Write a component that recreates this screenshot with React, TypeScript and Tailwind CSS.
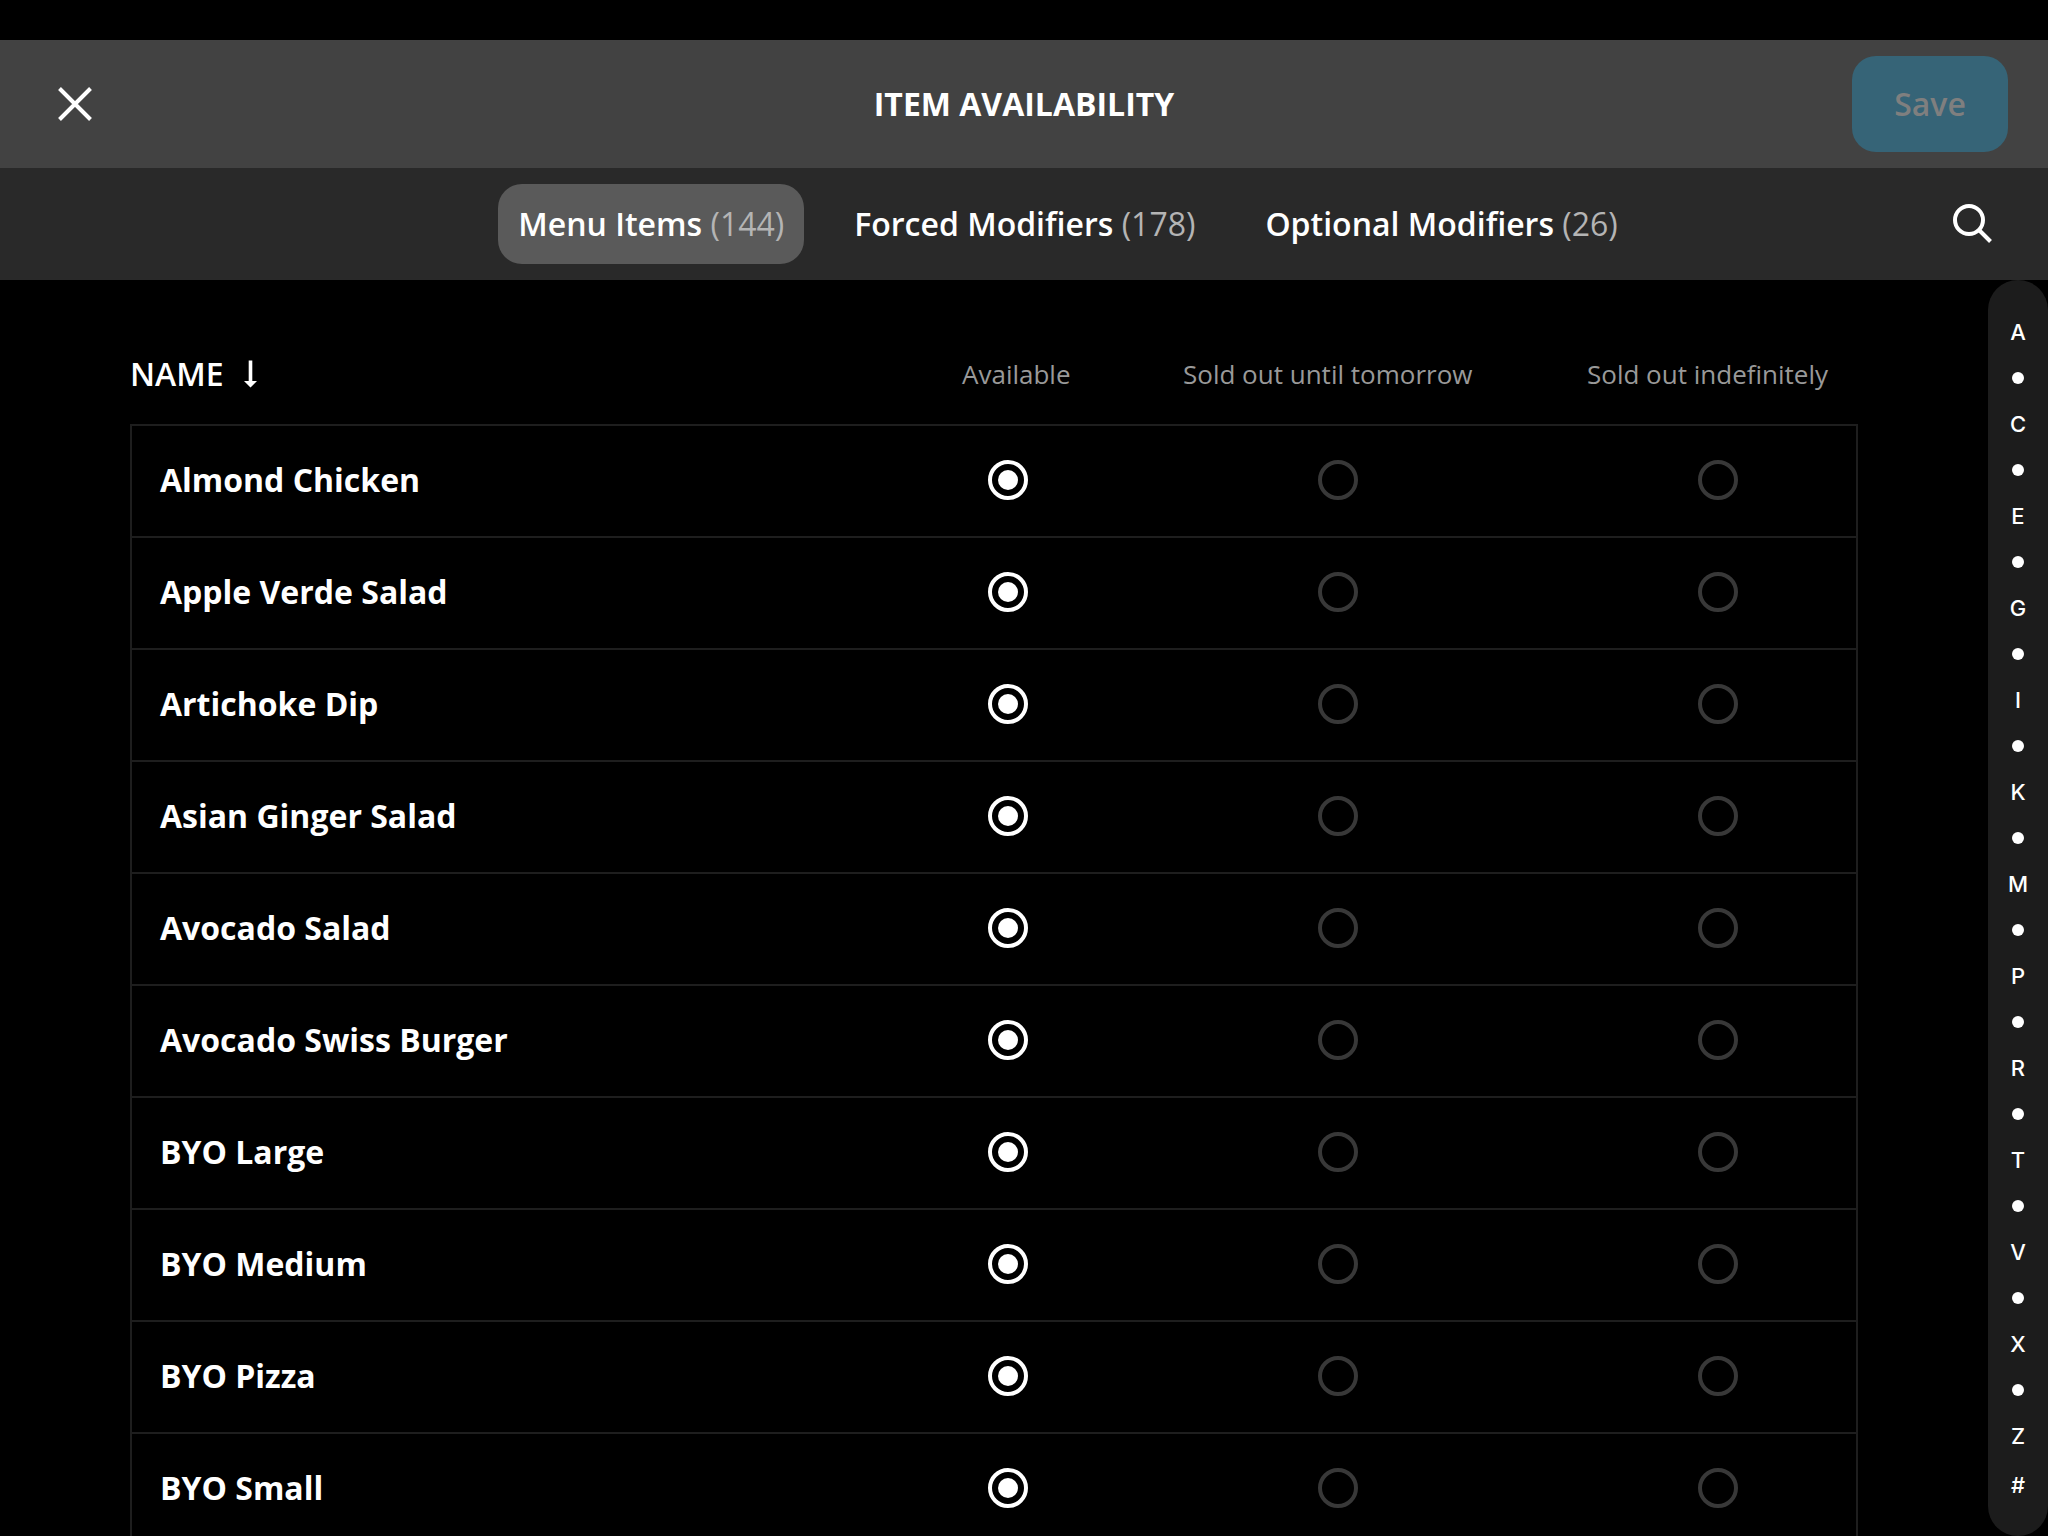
import { useState } from "react";

type Status = "available" | "tomorrow" | "indefinite";

const columns: { id: Status; label: string; width: string; inset: string }[] = [
    { id: "available", label: "Available", width: "w-[221px]", inset: "pl-[26px]" },
    { id: "tomorrow", label: "Sold out until tomorrow", width: "w-[404px]", inset: "pl-[135px]" },
    { id: "indefinite", label: "Sold out indefinitely", width: "w-[271px]", inset: "pl-[111px]" },
];

const tabs = [
    { id: "menu", label: "Menu Items", count: 144 },
    { id: "forced", label: "Forced Modifiers", count: 178 },
    { id: "optional", label: "Optional Modifiers", count: 26 },
];

const items = [
    "Almond Chicken",
    "Apple Verde Salad",
    "Artichoke Dip",
    "Asian Ginger Salad",
    "Avocado Salad",
    "Avocado Swiss Burger",
    "BYO Large",
    "BYO Medium",
    "BYO Pizza",
    "BYO Small",
];

// "•" stands for the letters skipped between two shown ones
const indexEntries = "A•C•E•G•I•K•M•P•R•T•V•X•Z#".split("");

function Header() {
    return (
        <header className="h-32 shrink-0 bg-[#424242] grid grid-cols-3 items-center px-10">
            <button type="button" aria-label="Close" className="justify-self-start p-4">
                <svg width="38" height="38" viewBox="0 0 38 38" fill="none" stroke="currentColor" strokeWidth="4">
                    <path d="M3.5 3.5 34.5 34.5M34.5 3.5 3.5 34.5" />
                </svg>
            </button>
            <h1 className="text-center text-[32px] font-bold whitespace-nowrap">ITEM AVAILABILITY</h1>
            <button
                type="button"
                disabled
                className="justify-self-end h-24 w-[156px] rounded-3xl bg-[#366477] text-[#7f7f7f] text-[32px] font-semibold"
            >
                Save
            </button>
        </header>
    );
}

function Tabs() {
    const [active, setActive] = useState("menu");

    return (
        <div className="h-28 shrink-0 bg-[#292929] flex items-center pl-[202px] pr-10">
            <div role="tablist" className="flex-1 flex justify-center gap-[30px]">
                {tabs.map((tab) => (
                    <button
                        key={tab.id}
                        type="button"
                        role="tab"
                        aria-selected={active === tab.id}
                        onClick={() => setActive(tab.id)}
                        className={`h-20 px-5 rounded-3xl text-[32px] font-semibold whitespace-nowrap ${
                            active === tab.id ? "bg-[#5a5a5a]" : ""
                        }`}
                    >
                        {tab.label} <span className="font-normal text-[#b4b4b4]">({tab.count})</span>
                    </button>
                ))}
            </div>
            <button type="button" aria-label="Search" className="p-4">
                <svg width="42" height="42" viewBox="0 0 42 42" fill="none" stroke="currentColor" strokeWidth="4">
                    <circle cx="19" cy="17" r="14" />
                    <path d="M29 27 40.5 38.5" />
                </svg>
            </button>
        </div>
    );
}

function ItemRow({ name }: { name: string }) {
    const [status, setStatus] = useState<Status>("available");

    return (
        <tr>
            <th
                scope="row"
                className="h-28 border-b-2 border-l-2 border-[#1e1e1e] pl-7 pb-0.5 text-left text-[32px] font-bold"
            >
                {name}
            </th>
            {columns.map((column) => (
                <td
                    key={column.id}
                    className={`border-b-2 border-[#1e1e1e] last:border-r-2 pb-0.5 ${column.inset}`}
                >
                    <input
                        type="radio"
                        name={name}
                        aria-label={`${name}: ${column.label}`}
                        checked={status === column.id}
                        onChange={() => setStatus(column.id)}
                        className="block size-10 appearance-none rounded-full border-4 border-[#383838] checked:border-white p-1.5 before:block before:size-5 before:rounded-full checked:before:bg-white"
                    />
                </td>
            ))}
        </tr>
    );
}

function AlphabetIndex() {
    return (
        <nav
            aria-label="Alphabet"
            className="w-[60px] shrink-0 rounded-full bg-[#1c1c1c] pt-[29px] font-['Inter',sans-serif]"
        >
            <ul>
                {indexEntries.map((entry, i) => (
                    <li key={i} className="h-[46px] last:h-[52px] flex items-center justify-center">
                        {entry === "•" ? (
                            <span className="size-3 rounded-full bg-white" />
                        ) : (
                            <a href={`#${entry}`} className="text-[22px] font-medium">
                                {entry}
                            </a>
                        )}
                    </li>
                ))}
            </ul>
        </nav>
    );
}

export default function App() {
    return (
        <div className="h-screen overflow-hidden flex flex-col bg-black pt-10 text-white font-['Open_Sans',sans-serif]">
            <Header />
            <Tabs />
            <div className="flex-1 min-h-0 flex">
                <main className="flex-1 overflow-hidden px-[130px] pt-[46px]">
                    <table className="w-full table-fixed border-separate border-spacing-0">
                        <thead>
                            <tr>
                                <th scope="col" className="h-[100px] border-b-2 border-[#1e1e1e] pb-0.5 text-left">
                                    <button type="button" className="flex items-center gap-5 text-[32px] font-semibold">
                                        NAME
                                        <svg width="14" height="28" viewBox="0 0 14 28" fill="currentColor">
                                            <path d="M4.7 0.500h3.600v20.500H13L6.500 27.500 0 21h4.700z" />
                                        </svg>
                                    </button>
                                </th>
                                {columns.map((column) => (
                                    <th
                                        key={column.id}
                                        scope="col"
                                        className={`border-b-2 border-[#1e1e1e] pb-0.5 text-left text-[26px] font-normal whitespace-nowrap text-[#999999] ${column.width}`}
                                    >
                                        {column.label}
                                    </th>
                                ))}
                            </tr>
                        </thead>
                        <tbody>
                            {items.map((item) => (
                                <ItemRow key={item} name={item} />
                            ))}
                        </tbody>
                    </table>
                </main>
                <AlphabetIndex />
            </div>
        </div>
    );
}
